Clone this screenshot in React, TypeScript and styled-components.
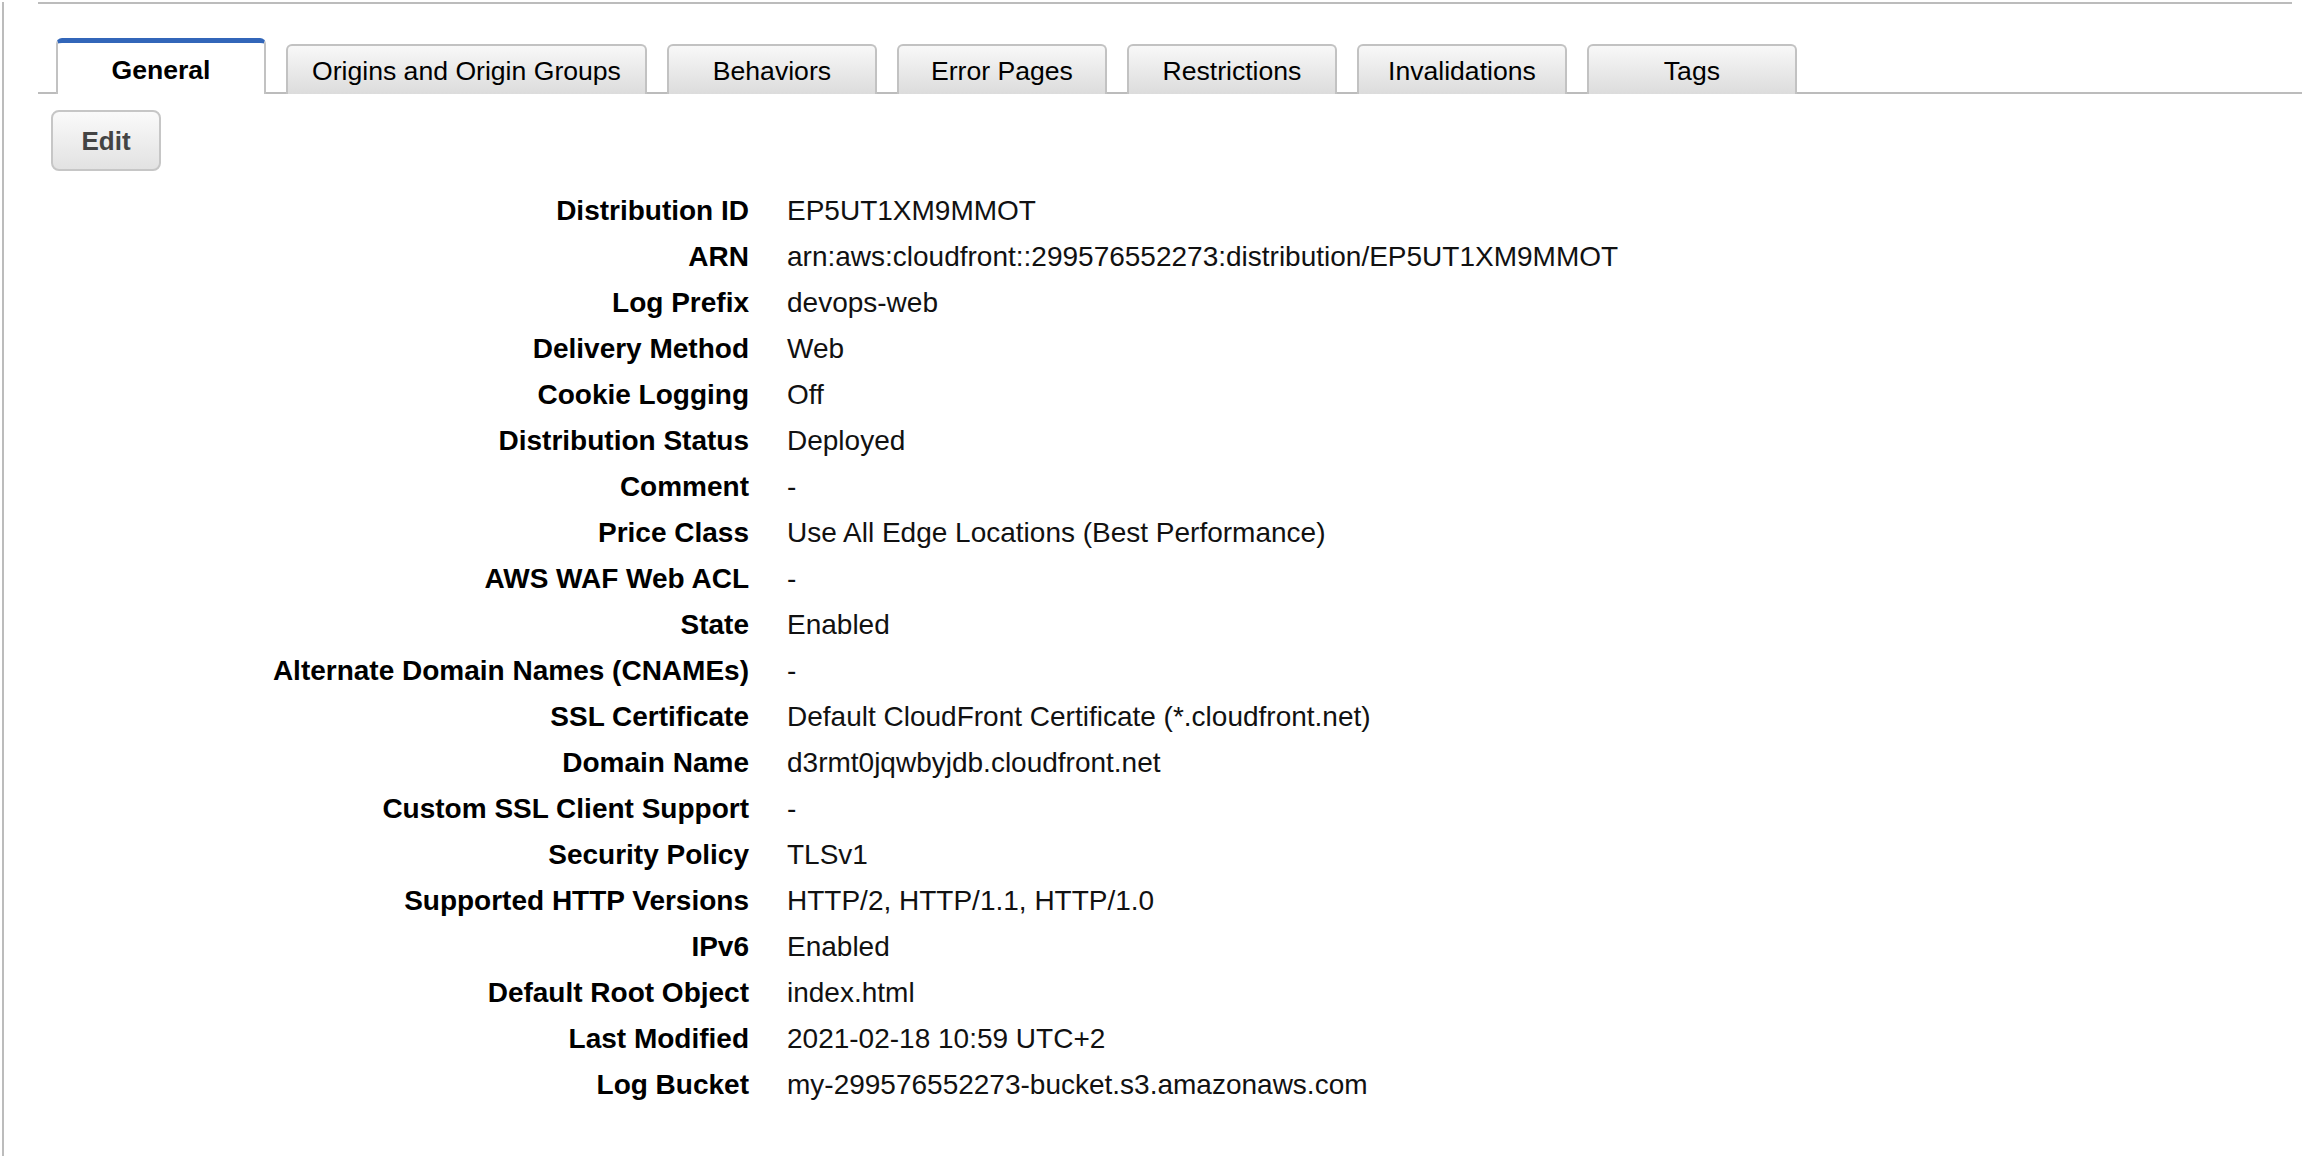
import React from 'react';
import styled, { createGlobalStyle } from 'styled-components';

const GlobalStyle = createGlobalStyle`
  html, body {
    margin: 0;
    padding: 0;
    background: #fff;
  }
  body {
    font-family: "Liberation Sans", Arial, Helvetica, sans-serif;
    color: #000;
  }
`;

const Frame = styled.div`
  margin-left: 2px;
  min-height: 100vh;
  border-left: 2px solid #bcbcbc;
  box-sizing: border-box;
`;

const Content = styled.div`
  margin-left: 34px;
  width: 2264px;
`;

const TopRule = styled.div`
  margin-top: 2px;
  margin-right: 10px;
  height: 2px;
  background: #bcbcbc;
`;

const TabBar = styled.div`
  display: flex;
  align-items: flex-end;
  gap: 20px;
  height: 90px;
  box-sizing: border-box;
  padding-left: 18px;
  border-bottom: 2px solid #bcbcbc;
`;

const Tab = styled.div<{ $active?: boolean }>`
  display: flex;
  align-items: center;
  justify-content: center;
  box-sizing: border-box;
  min-width: 210px;
  padding: 3px 24px 0;
  margin-bottom: -2px;
  height: ${(p) => (p.$active ? '56px' : '50px')};
  border: 2px solid #c2c2c2;
  border-bottom: none;
  border-top: ${(p) => (p.$active ? '5px solid #3266b9' : '2px solid #c2c2c2')};
  border-radius: 6px 6px 0 0;
  background: ${(p) => (p.$active ? '#fff' : 'linear-gradient(#f8f8f8, #dcdcdc)')};
  font-size: 26.6px;
  font-weight: ${(p) => (p.$active ? 700 : 400)};
  color: #000;
  white-space: nowrap;
  cursor: pointer;
`;

const Toolbar = styled.div`
  padding: 16px 0 0 13px;
`;

const Button = styled.button`
  width: 110px;
  height: 61px;
  box-sizing: border-box;
  padding-top: 3px;
  border: 2px solid #c6c6c6;
  border-radius: 8px;
  background: linear-gradient(#fafafa, #e2e2e2);
  font-family: "Liberation Sans", Arial, Helvetica, sans-serif;
  font-size: 26px;
  font-weight: 700;
  color: #444;
  cursor: pointer;
`;

const DetailGrid = styled.dl`
  display: grid;
  grid-template-columns: 711px auto;
  column-gap: 38px;
  margin: 17px 0 0;
  font-size: 28px;
  line-height: 46px;
`;

const Label = styled.dt`
  text-align: right;
  font-weight: 700;
  color: #000;
  white-space: nowrap;
`;

const Value = styled.dd`
  margin: 0;
  color: #111;
  white-space: nowrap;
`;

const tabs = [
  'General',
  'Origins and Origin Groups',
  'Behaviors',
  'Error Pages',
  'Restrictions',
  'Invalidations',
  'Tags',
];

const details: [string, string][] = [
  ['Distribution ID', 'EP5UT1XM9MMOT'],
  ['ARN', 'arn:aws:cloudfront::299576552273:distribution/EP5UT1XM9MMOT'],
  ['Log Prefix', 'devops-web'],
  ['Delivery Method', 'Web'],
  ['Cookie Logging', 'Off'],
  ['Distribution Status', 'Deployed'],
  ['Comment', '-'],
  ['Price Class', 'Use All Edge Locations (Best Performance)'],
  ['AWS WAF Web ACL', '-'],
  ['State', 'Enabled'],
  ['Alternate Domain Names (CNAMEs)', '-'],
  ['SSL Certificate', 'Default CloudFront Certificate (*.cloudfront.net)'],
  ['Domain Name', 'd3rmt0jqwbyjdb.cloudfront.net'],
  ['Custom SSL Client Support', '-'],
  ['Security Policy', 'TLSv1'],
  ['Supported HTTP Versions', 'HTTP/2, HTTP/1.1, HTTP/1.0'],
  ['IPv6', 'Enabled'],
  ['Default Root Object', 'index.html'],
  ['Last Modified', '2021-02-18 10:59 UTC+2'],
  ['Log Bucket', 'my-299576552273-bucket.s3.amazonaws.com'],
];

const App = () => {
  const [active, setActive] = React.useState('General');
  return (
    <>
      <GlobalStyle />
      <Frame>
        <Content>
          <TopRule />
          <TabBar>
            {tabs.map((t) => (
              <Tab key={t} $active={t === active} onClick={() => setActive(t)}>
                {t}
              </Tab>
            ))}
          </TabBar>
          <Toolbar>
            <Button>Edit</Button>
          </Toolbar>
          <DetailGrid>
            {details.map(([k, v]) => (
              <React.Fragment key={k}>
                <Label>{k}</Label>
                <Value>{v}</Value>
              </React.Fragment>
            ))}
          </DetailGrid>
        </Content>
      </Frame>
    </>
  );
};

export default App;
